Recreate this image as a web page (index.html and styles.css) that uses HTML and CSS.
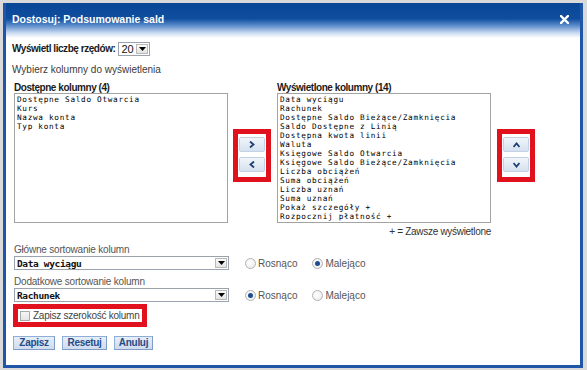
FILE: index.html
```html
<!DOCTYPE html>
<html lang="pl">
<head>
<meta charset="utf-8">
<title>Dostosuj: Podsumowanie sald</title>
<link rel="stylesheet" href="styles.css">
</head>
<body>
<div class="dialog">
  <div class="titlebar">
    <span class="title">Dostosuj: Podsumowanie sald</span>
    <svg class="close" width="9" height="9" viewBox="0 0 9 9"><path d="M1 1 L8 8 M8 1 L1 8" stroke="#fff" stroke-width="2.4" stroke-linecap="square"/></svg>
  </div>
  <div class="content">
    <div class="rows-row">
      <span class="blabel">Wyświetl liczbę rzędów:</span>
      <span class="select sel-small"><span class="val">20</span><span class="ddbtn"><svg width="7" height="5" viewBox="0 0 7 5"><path d="M0 0 H7 L3.5 4 Z" fill="#000"/></svg></span></span>
    </div>
    <div class="hint">Wybierz kolumny do wyświetlenia</div>
    <div class="columns">
      <div class="col">
        <div class="clabel">Dostępne kolumny (4)</div>
        <div class="listbox">
          <div>Dostępne Saldo Otwarcia</div>
          <div>Kurs</div>
          <div>Nazwa konta</div>
          <div>Typ konta</div>
        </div>
      </div>
      <div class="redbox">
        <button class="arrow"><svg width="6" height="7" viewBox="0 0 6 7"><path d="M1 0.5 L4.5 3.5 L1 6.5" fill="none" stroke="#1c3f74" stroke-width="1.8"/></svg></button>
        <button class="arrow"><svg width="6" height="7" viewBox="0 0 6 7"><path d="M5 0.5 L1.5 3.5 L5 6.5" fill="none" stroke="#1c3f74" stroke-width="1.8"/></svg></button>
      </div>
      <div class="col">
        <div class="clabel">Wyświetlone kolumny (14)</div>
        <div class="listbox">
          <div>Data wyciągu</div>
          <div>Rachunek</div>
          <div>Dostępne Saldo Bieżące/Zamknięcia</div>
          <div>Saldo Dostępne z Linią</div>
          <div>Dostępna kwota linii</div>
          <div>Waluta</div>
          <div>Księgowe Saldo Otwarcia</div>
          <div>Księgowe Saldo Bieżące/Zamknięcia</div>
          <div>Liczba obciążeń</div>
          <div>Suma obciążeń</div>
          <div>Liczba uznań</div>
          <div>Suma uznań</div>
          <div>Pokaż szczegóły +</div>
          <div>Rozpocznij płatność +</div>
        </div>
        <div class="legend">+ = Zawsze wyświetlone</div>
      </div>
      <div class="redbox">
        <button class="arrow"><svg width="7" height="6" viewBox="0 0 7 6"><path d="M0.5 5 L3.5 1.5 L6.5 5" fill="none" stroke="#1c3f74" stroke-width="1.8"/></svg></button>
        <button class="arrow"><svg width="7" height="6" viewBox="0 0 7 6"><path d="M0.5 1 L3.5 4.5 L6.5 1" fill="none" stroke="#1c3f74" stroke-width="1.8"/></svg></button>
      </div>
    </div>
    <div class="sort first">
      <div class="slabel">Główne sortowanie kolumn</div>
      <div class="sortrow">
        <span class="select sel-wide"><span class="val mono">Data wyciągu</span><span class="ddbtn"><svg width="7" height="5" viewBox="0 0 7 5"><path d="M0 0 H7 L3.5 4 Z" fill="#000"/></svg></span></span>
        <span class="radio"><span class="rb"></span>Rosnąco</span>
        <span class="radio"><span class="rb checked"></span>Malejąco</span>
      </div>
    </div>
    <div class="sort">
      <div class="slabel">Dodatkowe sortowanie kolumn</div>
      <div class="sortrow">
        <span class="select sel-wide"><span class="val mono">Rachunek</span><span class="ddbtn"><svg width="7" height="5" viewBox="0 0 7 5"><path d="M0 0 H7 L3.5 4 Z" fill="#000"/></svg></span></span>
        <span class="radio"><span class="rb checked"></span>Rosnąco</span>
        <span class="radio"><span class="rb"></span>Malejąco</span>
      </div>
    </div>
    <div class="savebox"><span class="cb"></span>Zapisz szerokość kolumn</div>
    <div class="buttons">
      <button class="btn b1">Zapisz</button>
      <button class="btn b2">Resetuj</button>
      <button class="btn b3">Anuluj</button>
    </div>
  </div>
</div>
</body>
</html>
```

FILE: styles.css
```css
html, body { height: 100%; }
body {
  margin: 0;
  background: #dadada;
  font-family: "Liberation Sans", Arial, sans-serif;
  font-size: 10px;
  color: #444;
  overflow: hidden;
}
.dialog {
  margin: 3px 4px 0 3px;
  width: 574px;
  height: 362px;
  border: 3px solid #1f56a8;
  border-top: 0;
  background: #fff;
}
.titlebar {
  height: 35px;
  box-sizing: border-box;
  padding: 11px 11px 0 6px;
  display: flex;
  justify-content: space-between;
  align-items: flex-start;
  background: linear-gradient(to bottom, #0a4696 0%, #0f4e9f 45%, #5d8dcb 65%, #c7d9f0 85%, #ffffff 100%);
}
.title {
  color: #fff;
  font-weight: bold;
  font-size: 10.5px;
  line-height: 11px;
}
.close { margin-top: 1px; }
.content { padding: 4px 0 0 6px; }
.rows-row { display: flex; align-items: center; height: 13px; }
.blabel, .clabel {
  font-weight: bold;
  color: #1a1a1a;
  font-size: 10px;
  letter-spacing: -0.45px;
}
.blabel { margin-right: 3px; }
.select {
  display: inline-flex;
  align-items: center;
  justify-content: space-between;
  box-sizing: border-box;
  border: 1px solid #9aa3ad;
  background: #fff;
  height: 14px;
}
.sel-small { width: 32px; }
.val { padding-left: 2px; color: #111; font-size: 11px; }
.val.mono {
  font-family: "DejaVu Sans Mono", monospace;
  font-weight: bold;
  font-size: 9.5px;
  letter-spacing: -0.35px;
}
.ddbtn {
  width: 12px;
  height: 10px;
  margin-right: 1px;
  box-sizing: border-box;
  border: 1px solid #b9b9b9;
  background: linear-gradient(#fbfbfb, #e2e2e2);
  display: flex;
  align-items: flex-end;
  justify-content: center;
  padding-bottom: 1px;
}
.hint { margin-top: 9px; font-size: 10px; line-height: 12px; color: #3a3a3a; }
.columns { display: flex; align-items: flex-start; margin-top: 6px; padding-left: 2px; }
.col { width: 214px; }
.clabel { line-height: 11px; height: 11px; }
.listbox {
  box-sizing: border-box;
  height: 130px;
  border: 1px solid #a3a3a3;
  padding: 1px 2px;
  font-family: "DejaVu Sans Mono", monospace;
  font-size: 7.7px;
  letter-spacing: 0.71px;
  line-height: 9px;
  color: #000;
  white-space: nowrap;
}
.legend { text-align: right; margin-top: 4px; font-size: 10px; letter-spacing: -0.3px; line-height: 10px; color: #333; }
.redbox {
  margin-top: 47px;
  width: 38px;
  height: 53px;
  box-sizing: border-box;
  border: 5px solid #e1121d;
  padding: 3px 1px 0 1px;
  display: flex;
  flex-direction: column;
  gap: 5px;
}
.col + .redbox { margin-left: 5px; margin-right: 6px; }
.col + .redbox + .col + .redbox { margin-left: 6px; }
.arrow {
  width: 26px;
  height: 15px;
  padding: 0;
  margin: 0;
  border: 1px solid #c3d1e4;
  border-radius: 2px;
  background: linear-gradient(#f1f5fb, #d6e1ef);
  display: flex;
  align-items: center;
  justify-content: center;
}
.sort { margin-top: 6px; }
.sort.first { margin-top: 7px; }
.slabel { font-size: 10px; letter-spacing: -0.2px; line-height: 11px; color: #555; padding-left: 2px; }
.sortrow { display: flex; align-items: center; margin-top: 1px; padding-left: 2px; height: 14px; }
.sel-wide { width: 215px; }
.radio { display: inline-flex; align-items: center; font-size: 10px; color: #555; margin-left: 16px; }
.radio + .radio { margin-left: 15px; }
.rb {
  width: 11px;
  height: 11px;
  box-sizing: border-box;
  border-radius: 50%;
  border: 1px solid #b3b3b3;
  background: radial-gradient(circle at 40% 40%, #ffffff 0%, #e8e8e8 100%);
  margin-right: 2px;
  position: relative;
}
.rb.checked::after {
  content: "";
  position: absolute;
  left: 2px;
  top: 2px;
  width: 5px;
  height: 5px;
  border-radius: 50%;
  background: #1d4d8f;
}
.savebox {
  margin: 2px 0 0 1px;
  width: 134px;
  height: 23px;
  box-sizing: border-box;
  border: 5px solid #e1121d;
  display: flex;
  align-items: center;
  padding-left: 2px;
  font-size: 10px;
  letter-spacing: -0.25px;
  white-space: nowrap;
  color: #444;
}
.cb {
  width: 10px;
  height: 10px;
  box-sizing: border-box;
  border: 1px solid #a9a9a9;
  background: linear-gradient(#f6f6f6, #e4e4e4);
  margin-right: 3px;
}
.buttons { display: flex; gap: 7px; margin-top: 9px; padding-left: 1px; }
.btn {
  height: 14px;
  padding: 0;
  margin: 0;
  border: 1px solid #8eaed6;
  border-right-color: #7d9cc6;
  border-bottom-color: #7d9cc6;
  background: linear-gradient(#e6eef9, #cfdcee);
  font-family: "Liberation Sans", Arial, sans-serif;
  font-weight: bold;
  font-size: 10px;
  letter-spacing: -0.3px;
  line-height: 12px;
  color: #244d86;
  text-align: center;
}
.b1 { width: 42px; }
.b2 { width: 45px; }
.b3 { width: 39px; }
```
